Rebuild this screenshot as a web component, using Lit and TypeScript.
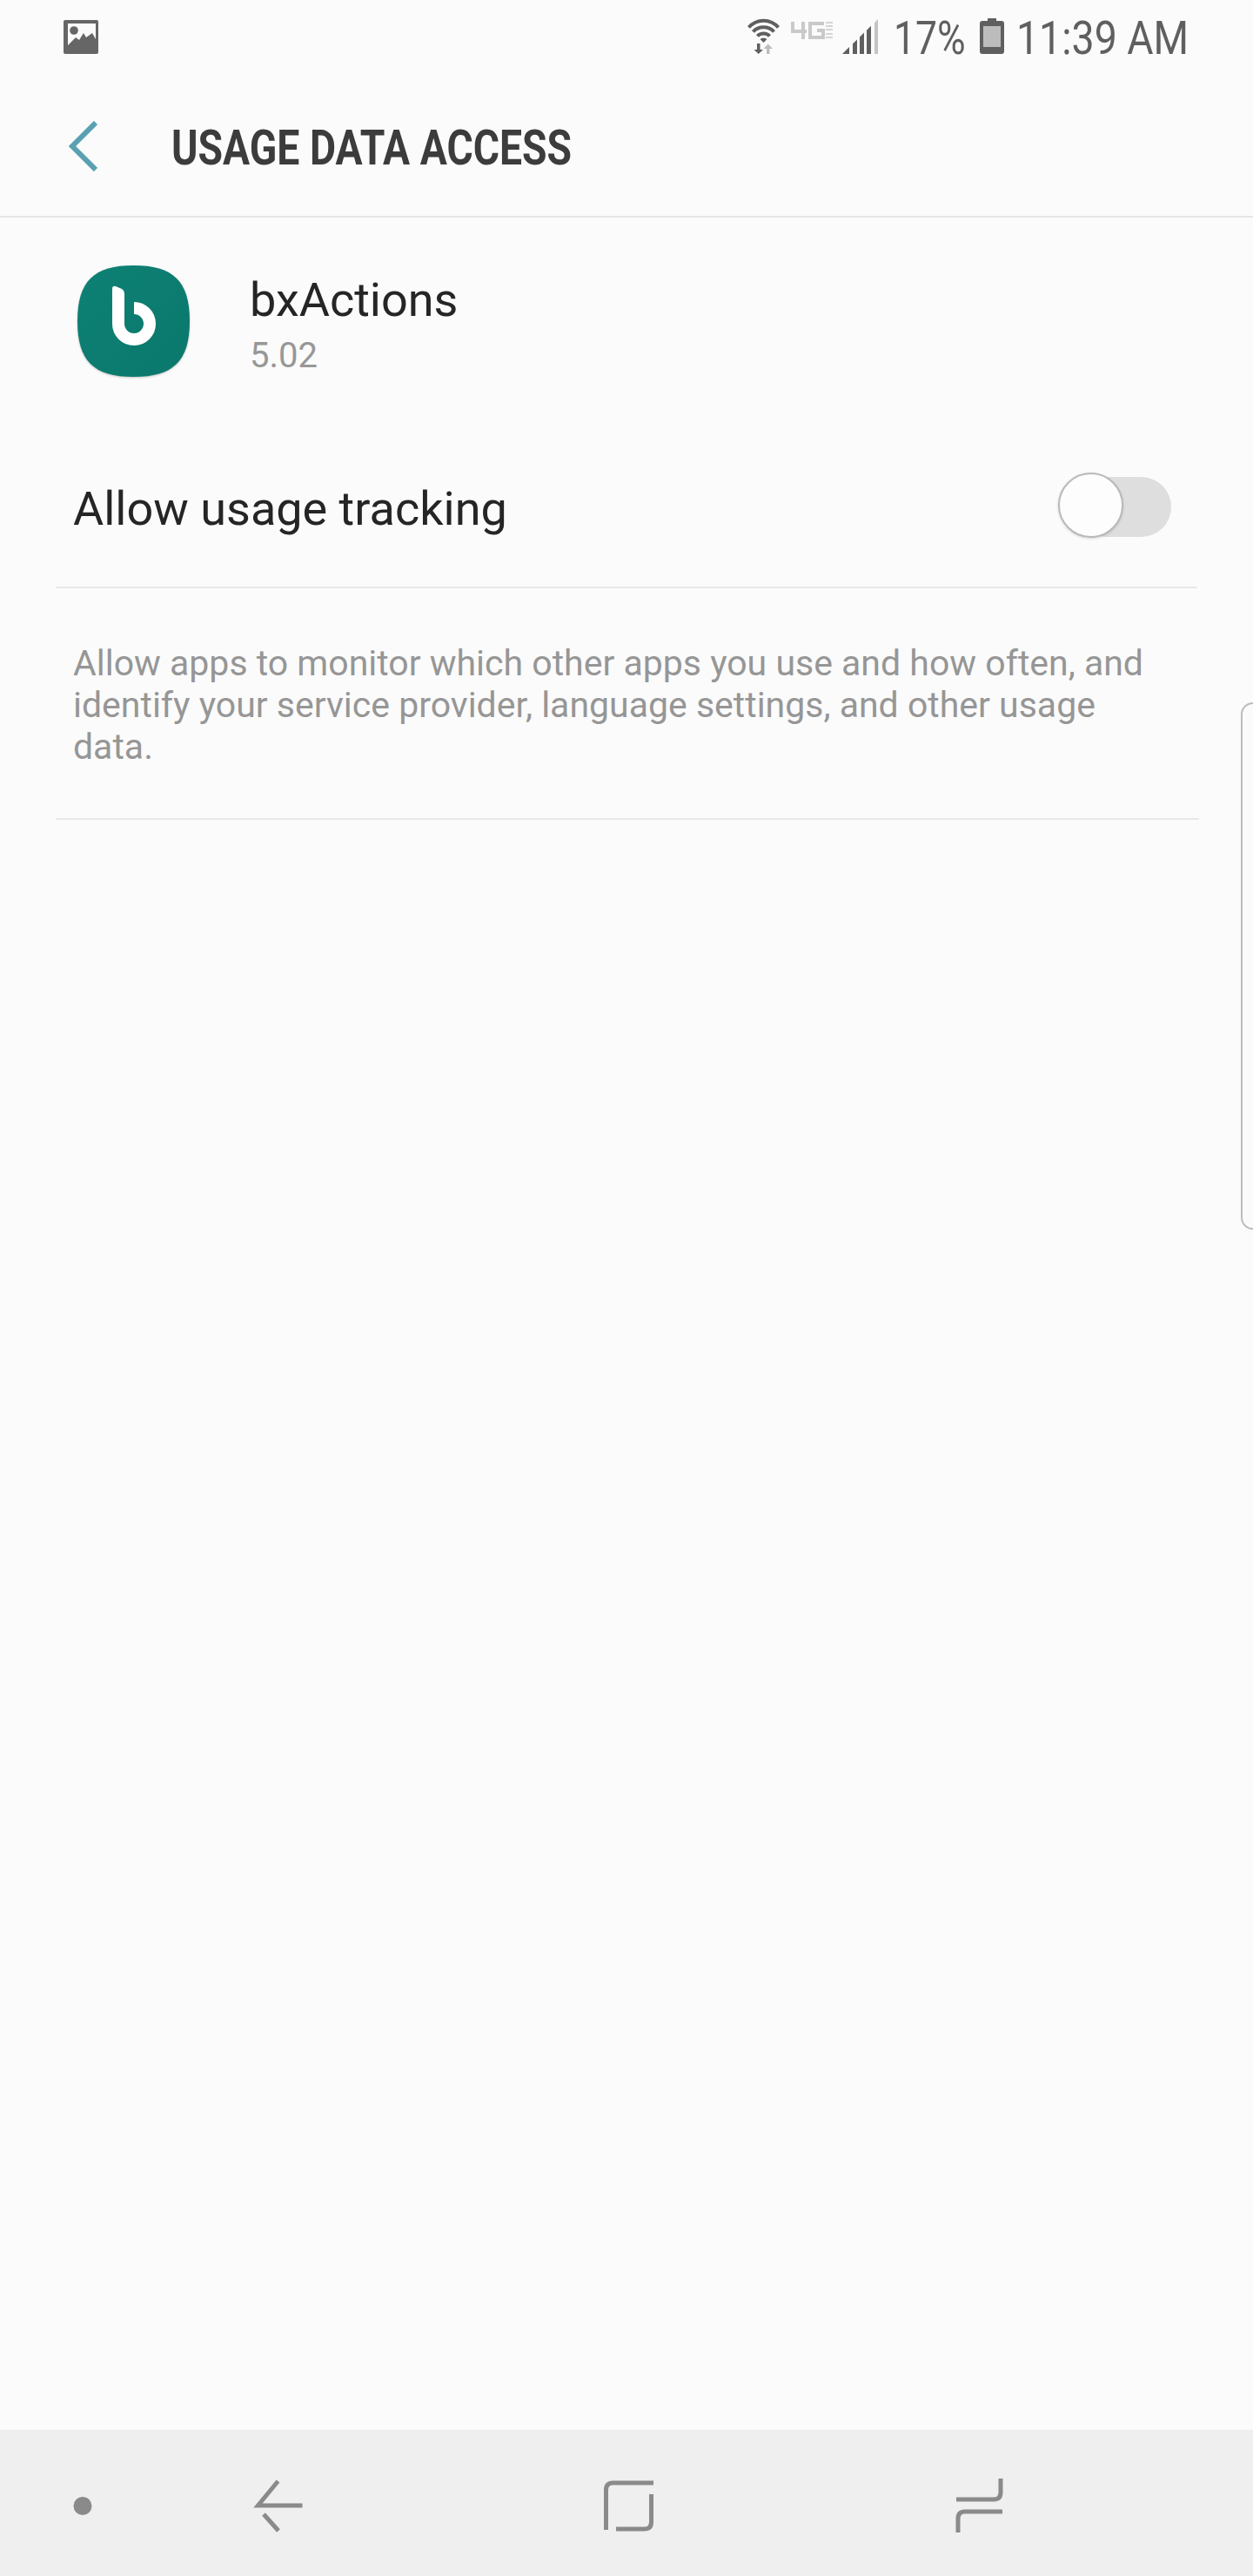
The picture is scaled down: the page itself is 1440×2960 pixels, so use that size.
import { LitElement, html, css } from "lit";
import { customElement } from "lit/decorators.js";

@customElement("app-root")
export class AppRoot extends LitElement {
  static styles = css`
    :host { display: block; width: 1440px; height: 2960px; background: #fbfbfb; font-family: Roboto, "Liberation Sans", sans-serif; position: relative; overflow: hidden; }
    .page { display: flex; flex-direction: column; height: 2960px; }
    svg { display: block; flex: none; }
    .status { height: 84px; display: flex; align-items: flex-start; padding: 21px 80px 0 73px; box-sizing: border-box; color: #5f5f5f; }
    .status .spacer { flex: 1; }
    .stxt { font-size: 53px; line-height: 44px; font-weight: 400; white-space: nowrap; margin-top: 1px; }
    .pct { width: 80px; margin-left: 18px; }
    .time { width: 192px; margin-left: 14px; }
    .stxt span { display: inline-block; transform-origin: left center; }
    .sx84 { transform: scaleX(.84); }
    .sx88 { transform: scaleX(.877); }
    .gal { margin-top: 2px; }
    .wifi { margin-top: -1px; }
    .lte { margin: 4px 0 0 13px; }
    .sig { margin: 1px 0 0 11px; }
    .bat { margin-left: 19px; }
    .header { height: 166px; box-sizing: border-box; border-bottom: 2px solid #e6e6e6; display: flex; align-items: center; padding: 4px 0 0 78px; }
    .title { margin: 4px 0 0 85px; font-size: 55px; line-height: 60px; font-weight: 700; color: #3c3c3c; white-space: nowrap; display: inline-block; transform: scaleX(.842); transform-origin: left center; }
    .app { display: flex; align-items: center; padding: 55px 0 0 89px; height: 128px; }
    .appicon { filter: drop-shadow(0 1px 1px rgba(0,0,0,.22)); }
    .meta { margin-left: 69px; display: flex; flex-direction: column; padding-top: 8px; }
    .name { font-size: 54px; line-height: 64px; color: #252525; }
    .ver { font-size: 40px; line-height: 48px; color: #979797; margin-top: 8px; }
    .row { display: flex; align-items: center; justify-content: space-between; margin: 0 64px; height: 243px; padding: 62px 30px 0 20px; box-sizing: border-box; border-bottom: 2px solid #e8e8e8; }
    .row .label { font-size: 54px; color: #252525; line-height: 64px; }
    .switch { width: 130px; height: 75px; position: relative; margin-bottom: 9px; }
    .track { position: absolute; left: 20px; right: 0; top: 5px; height: 69px; border-radius: 35px; background: #dedede; }
    .thumb { position: absolute; left: 0; top: 0; width: 75px; height: 75px; box-sizing: border-box; border-radius: 50%; background: #fdfdfd; border: 2px solid #b9b9b9; box-shadow: 0 1px 3px rgba(0,0,0,.15); }
    .desc { margin: 0 62px 0 64px; padding: 62px 20px 58px 20px; border-bottom: 2px solid #e8e8e8; font-size: 41px; line-height: 48px; color: #969696; }
    .fill { flex: 1; }
    .nav { height: 168px; background: #efefef; flex: none; }
    .edge { position: absolute; left: 1426px; top: 807px; width: 30px; height: 606px; box-sizing: border-box; border: 2px solid #bdbdbd; border-radius: 14px; }
  `;

  render() {
    return html`<div class="page">
      <div class="status">
        <svg class="gal" width="40" height="39" viewBox="0 0 40 39">
          <path fill="#666" fill-rule="evenodd" d="M2 0H38Q40 0 40 2V37Q40 39 38 39H2Q0 39 0 37V2Q0 0 2 0ZM5 4V29L14 20L18 23L23 15L26 20L33 15L37 22V4Z"/>
          <circle cx="12" cy="12" r="4.8" fill="#666"/>
        </svg>
        <div class="spacer"></div>
        <svg class="wifi" width="37" height="42" viewBox="0 0 37 42">
          <g fill="none" stroke="#5f5f5f" stroke-width="4">
            <path d="M1.5 11.5C10.5 1 26.5 1 35.5 11.5"/>
            <path d="M6.5 16.5C12.5 9.5 24.5 9.5 30.5 16.5"/>
            <path d="M11.5 21.5C15 17.5 22 17.5 25.5 21.5"/>
          </g>
          <path d="M18.5 29L14.5 25C17 23 20 23 22.5 25Z" fill="#5f5f5f"/>
          <path d="M11 30H14.5V37H18L12.7 42L7.5 37H11Z" fill="#5f5f5f"/>
          <path d="M22 42H25.5V36H29L23.7 30.5L18.5 36H22Z" fill="#bdbdbd"/>
        </svg>
        <svg class="lte" width="48" height="20" viewBox="0 0 48 20">
          <g fill="none" stroke="#c9c9c9" stroke-width="4">
            <path d="M2 0V11H18M14 0V20"/>
            <path d="M38 2H22V18H37V10H30"/>
          </g>
          <path d="M40 1H48M40 5H48M40 9H48M40 14H48M40 18H48" stroke="#d5d5d5" stroke-width="2"/>
        </svg>
        <svg class="sig" width="41" height="40" viewBox="0 0 41 40">
          <path d="M0 40L8 32V40Z" fill="#5f5f5f"/>
          <path d="M12 28.3L17 23.4V40H12ZM20 20.5L25 15.6V40H20ZM28 12.7L33 7.8V40H28Z" fill="#5f5f5f"/>
          <path d="M37 3.9L41 0V40H37Z" fill="#c4c4c4"/>
        </svg>
        <div class="stxt pct"><span class="sx84">17%</span></div>
        <svg class="bat" width="28" height="41" viewBox="0 0 28 41">
          <path d="M9 0H19V3H25Q28 3 28 6V38Q28 41 25 41H3Q0 41 0 38V6Q0 3 3 3H9Z" fill="#5f5f5f"/>
          <path d="M4 9H24V33H4Z" fill="#bcbcbc"/>
        </svg>
        <div class="stxt time"><span class="sx88">11:39 AM</span></div>
      </div>
      <div class="header">
        <svg width="34" height="58" viewBox="0 0 34 58">
          <path d="M32 2L5 29L32 56" fill="none" stroke="#5aa0b2" stroke-width="6"/>
        </svg>
        <div class="title">USAGE DATA ACCESS</div>
      </div>
      <div class="app">
        <svg class="appicon" width="129" height="128" viewBox="0 0 129 128">
          <defs><linearGradient id="g" x1="0" y1="0" x2="1" y2="1"><stop offset="0" stop-color="#0e8174"/><stop offset="1" stop-color="#0a786c"/></linearGradient></defs>
          <path fill="url(#g)" d="M64.5 0C110 0 129 18 129 64C129 110 110 128 64.5 128C19 128 0 110 0 64C0 18 19 0 64.5 0Z"/>
          <path fill="none" stroke="#fff" stroke-width="14" d="M47 34V67A18 18 0 1 0 65 49"/>
          <path fill="#fff" d="M40 36V27Q40 23 44 24L51 27Q54 29 54 33V36Z"/>
        </svg>
        <div class="meta">
          <div class="name">bxActions</div>
          <div class="ver">5.02</div>
        </div>
      </div>
      <div class="row">
        <div class="label">Allow usage tracking</div>
        <div class="switch"><div class="track"></div><div class="thumb"></div></div>
      </div>
      <div class="desc">Allow apps to monitor which other apps you use and how often, and identify your service provider, language settings, and other usage data.</div>
      <div class="fill"></div>
      <div class="nav">
        <svg width="1440" height="168" viewBox="0 2792 1440 168">
          <circle cx="95" cy="2879.5" r="10.5" fill="#8a8a8a"/>
          <g fill="none" stroke="#8a8a8a" stroke-width="5">
            <path d="M319.5 2851L296.5 2879H347.5"/>
            <path d="M303 2889L320 2908"/>
            <path d="M696.5 2907V2861Q696.5 2853 704.5 2853H751"/>
            <path d="M708 2906H740.5Q748.5 2906 748.5 2898V2866"/>
            <path d="M1150 2848V2864Q1150 2872 1142 2872H1099"/>
            <path d="M1152 2886H1109Q1101 2886 1101 2894V2910"/>
          </g>
        </svg>
      </div>
    </div>
    <div class="edge"></div>`;
  }
}
